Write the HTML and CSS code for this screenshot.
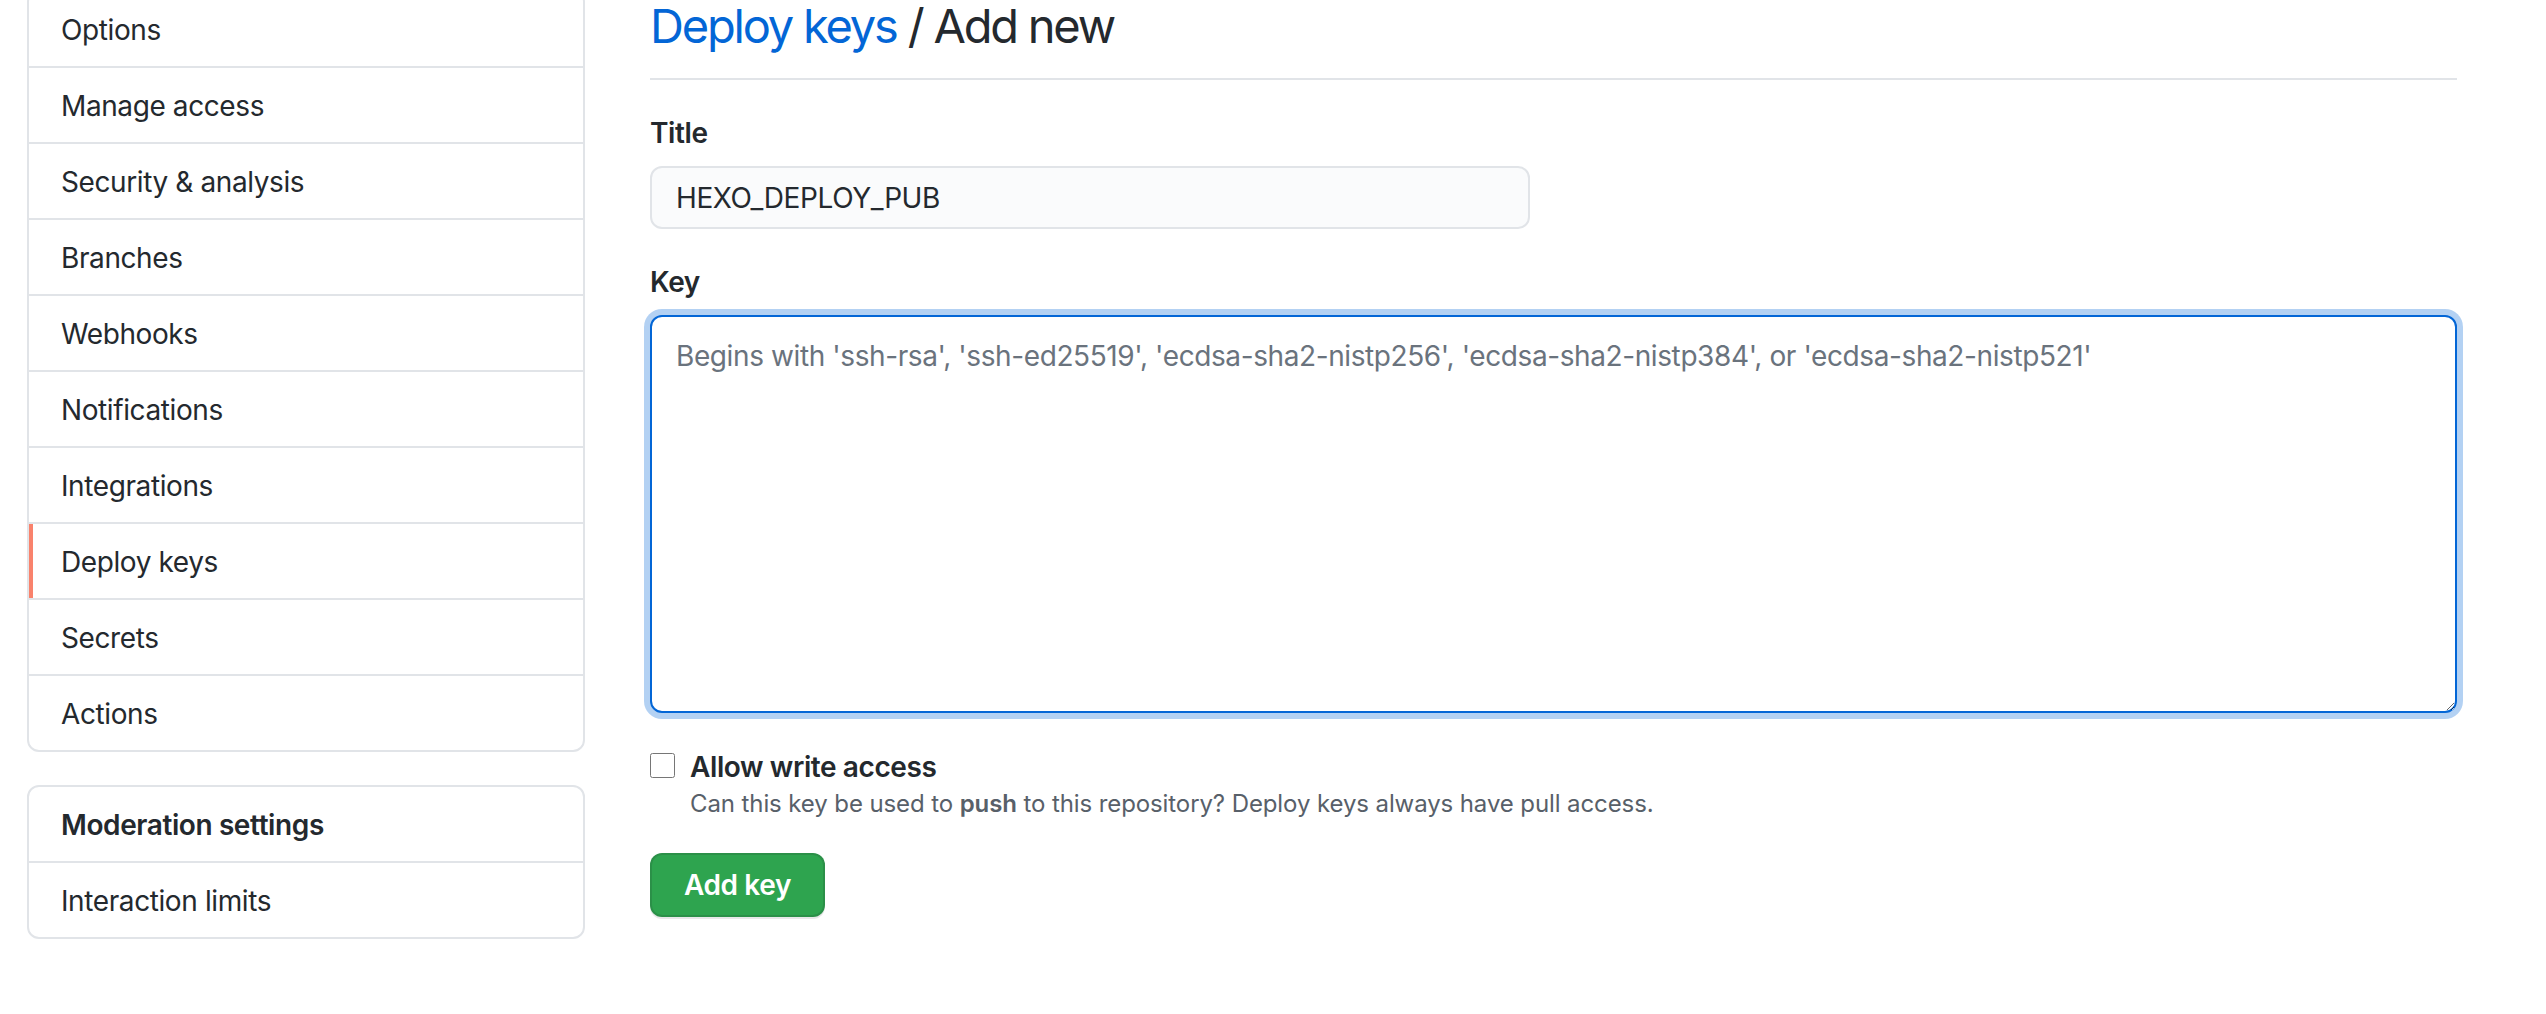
FILE: index.html
```html
<!DOCTYPE html>
<html lang="en">
<head>
<meta charset="utf-8">
<title>Deploy keys / Add new</title>
<link rel="stylesheet" href="styles.css">
</head>
<body>
<div class="page">
  <aside class="sidebar">
    <nav class="menu">
      <a class="menu-item" href="#">Options</a>
      <a class="menu-item" href="#">Manage access</a>
      <a class="menu-item" href="#">Security &amp; analysis</a>
      <a class="menu-item" href="#">Branches</a>
      <a class="menu-item" href="#">Webhooks</a>
      <a class="menu-item" href="#">Notifications</a>
      <a class="menu-item" href="#">Integrations</a>
      <a class="menu-item selected" href="#">Deploy keys</a>
      <a class="menu-item" href="#">Secrets</a>
      <a class="menu-item" href="#">Actions</a>
    </nav>
    <nav class="menu menu-mod">
      <h3 class="menu-heading">Moderation settings</h3>
      <a class="menu-item" href="#">Interaction limits</a>
    </nav>
  </aside>
  <main class="content">
    <h2 class="subhead"><a class="crumb" href="#">Deploy keys</a> / Add new</h2>
    <form class="form">
      <div class="form-group">
        <label class="form-label" for="title">Title</label>
        <input class="form-control input-title" id="title" type="text" value="HEXO_DEPLOY_PUB">
      </div>
      <div class="form-group">
        <label class="form-label" for="key">Key</label>
        <textarea class="form-control textarea-key" id="key" placeholder="Begins with 'ssh-rsa', 'ssh-ed25519', 'ecdsa-sha2-nistp256', 'ecdsa-sha2-nistp384', or 'ecdsa-sha2-nistp521'"></textarea>
      </div>
      <div class="form-checkbox">
        <label class="check-label"><input class="check" type="checkbox"> Allow write access</label>
        <p class="note">Can this key be used to <strong>push</strong> to this repository? Deploy keys always have pull access.</p>
      </div>
      <button class="btn-primary" type="button">Add key</button>
    </form>
  </main>
</div>
</body>
</html>
```

FILE: styles.css
```css
* {
  box-sizing: border-box;
}

html, body {
  margin: 0;
  padding: 0;
  background: #ffffff;
}

body {
  font-family: Inter, "Liberation Sans", Arial, sans-serif;
  color: #24292e;
  font-size: 28px;
  line-height: 42px;
  letter-spacing: -0.4px;
}

.page {
  display: flex;
  align-items: flex-start;
  gap: 65px;
  padding-left: 27px;
  margin-top: -10px;
}

.sidebar {
  width: 558px;
  flex: none;
  display: flex;
  flex-direction: column;
  gap: 33px;
}

.menu {
  display: flex;
  flex-direction: column;
  border: 2px solid #e1e4e8;
  border-radius: 12px;
  background: #fff;
  overflow: hidden;
}

.menu-item,
.menu-heading {
  position: relative;
  display: block;
  padding: 17px 32px 15px;
  line-height: 42px;
  font-size: 28px;
  color: #24292e;
  text-decoration: none;
  border-bottom: 2px solid #e1e4e8;
  margin: 0;
}

.menu-item:last-child {
  border-bottom: 0;
}

.menu-heading {
  font-weight: 600;
}

.menu-item.selected::before {
  content: "";
  position: absolute;
  left: 0;
  top: 0;
  bottom: 0;
  width: 4px;
  background: #f9826c;
}

.content {
  width: 1807px;
  flex: none;
}

.subhead {
  margin: 0 0 32px;
  padding-bottom: 16px;
  border-bottom: 2px solid #e1e4e8;
  font-size: 47px;
  line-height: 72px;
  font-weight: 400;
  letter-spacing: -2.2px;
  color: #24292e;
}

.crumb {
  color: #0366d6;
  text-decoration: none;
}

.form {
  display: flex;
  flex-direction: column;
  align-items: flex-start;
}

.form-group {
  display: flex;
  flex-direction: column;
  align-items: flex-start;
  margin-bottom: 32px;
  width: 100%;
}

.form-label {
  font-weight: 600;
  font-size: 28px;
  line-height: 42px;
  margin-bottom: 12px;
}

.form-control {
  font-family: inherit;
  font-size: 28px;
  line-height: 40px;
  letter-spacing: -0.4px;
  color: #24292e;
  border: 2px solid #e1e4e8;
  border-radius: 12px;
  outline: none;
}

.input-title {
  width: 880px;
  height: 63px;
  padding: 10px 24px;
  background: #fafbfc;
}

.textarea-key {
  width: 100%;
  height: 398px;
  padding: 19px 24px 10px;
  background: #fff;
  border-color: #0366d6;
  box-shadow: 0 0 0 6px rgba(3, 102, 214, 0.3);
  resize: vertical;
}

.textarea-key::placeholder {
  color: #6a737d;
  opacity: 1;
}

.form-checkbox {
  position: relative;
  padding-left: 40px;
  margin-top: 1px;
  margin-bottom: 31px;
}

.check-label {
  display: block;
  font-weight: 600;
  font-size: 28px;
  line-height: 42px;
}

.check {
  position: absolute;
  left: 0;
  top: 7px;
  width: 25px;
  height: 25px;
  margin: 0;
}

.note {
  margin: -2px 0 0;
  font-size: 24px;
  line-height: 36px;
  letter-spacing: -0.1px;
  color: #586069;
}

.note strong {
  font-weight: 600;
}

.btn-primary {
  font-family: inherit;
  font-size: 28px;
  line-height: 40px;
  font-weight: 600;
  letter-spacing: -0.4px;
  color: #fff;
  background: #2ea44f;
  border: 2px solid rgba(27, 31, 35, 0.15);
  border-radius: 12px;
  padding: 10px 32px;
  box-shadow: 0 2px 0 rgba(27, 31, 35, 0.1);
  cursor: pointer;
}
```
